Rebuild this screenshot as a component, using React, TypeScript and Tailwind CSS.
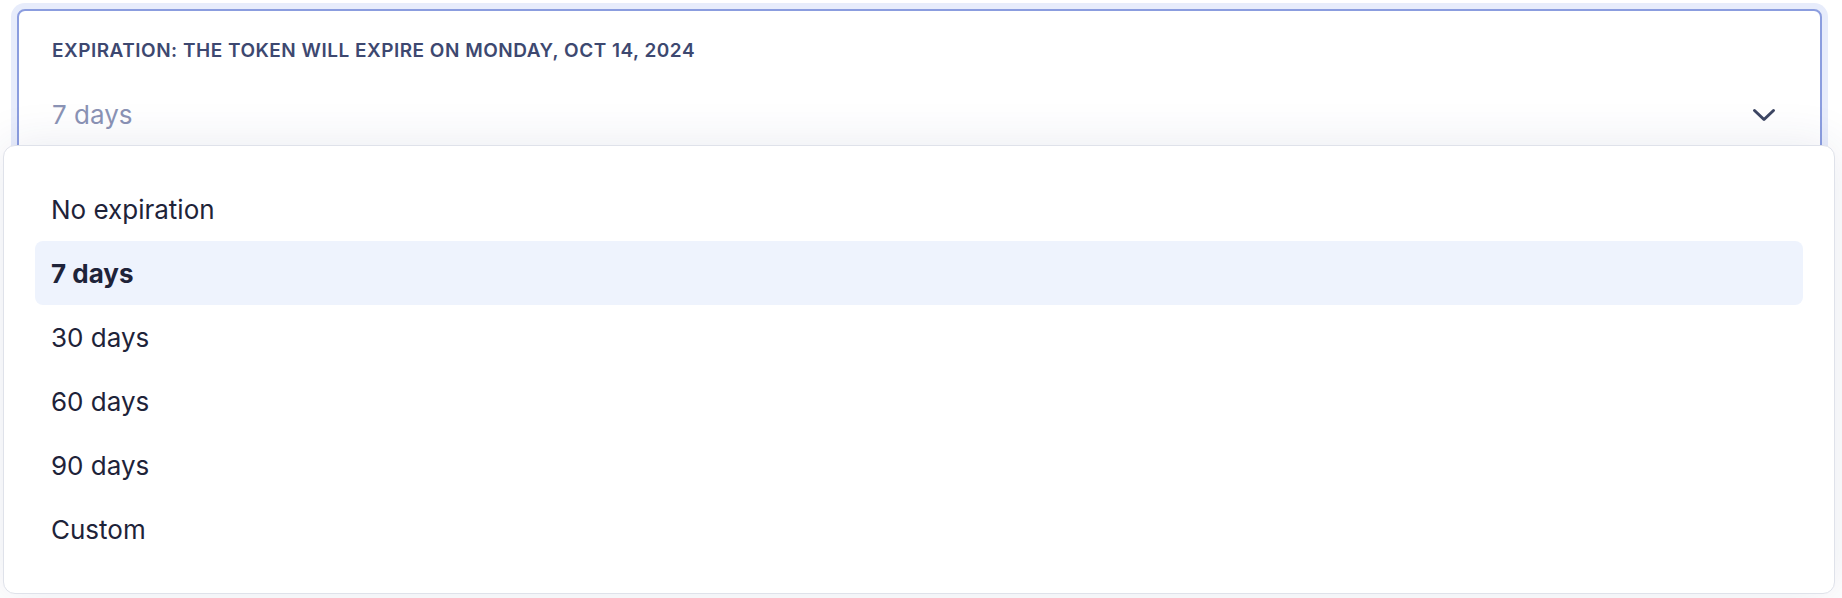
import React from "react";

const options = ["No expiration", "7 days", "30 days", "60 days", "90 days", "Custom"];

export default function App() {
  const selected = "7 days";
  return (
    <div
      className="relative h-[598px] w-[1842px] overflow-hidden bg-white"
      style={{ fontFamily: "Inter, 'Noto Sans', sans-serif" }}
    >
      <div className="pl-[17px] pr-[20px] pt-[9px]">
        <div className="relative h-[170px] rounded-[8px] border-2 border-[#8b9ddf] bg-white shadow-[0_0_0_6px_#e7ecfb]">
          <div className="pl-[33px] pt-[28px] text-[19px] font-semibold uppercase leading-[24px] tracking-[0.5px] text-[#3d4870]">
            Expiration: The token will expire on Monday, Oct 14, 2024
          </div>
          <div className="mt-[34px] flex items-center justify-between pl-[33px] pr-[44px]">
            <span className="text-[26px] leading-[36px] text-[#8b93b5]">7 days</span>
            <svg width="24" height="15" viewBox="0 0 24 15" fill="none" className="text-[#3d4663]">
              <path d="M2.5 2.5 L12 11.5 L21.5 2.5" stroke="currentColor" strokeWidth="3" strokeLinecap="round" strokeLinejoin="round" />
            </svg>
          </div>
        </div>
      </div>
      <div className="absolute left-[3px] top-[145px] w-[1832px] rounded-[12px] border border-[#dfe2ea] bg-white px-[31px] pb-[32px] pt-[31px] shadow-[0_0_48px_rgba(40,52,110,0.10)]">
        {options.map((o) => (
          <div
            key={o}
            className={
              o === selected
                ? "flex h-[64px] items-center rounded-[8px] bg-[#eef3fd] px-[16px] text-[26px] font-bold text-[#1e2339]"
                : "flex h-[64px] items-center rounded-[8px] px-[16px] text-[26px] text-[#1e2339]"
            }
          >
            {o}
          </div>
        ))}
      </div>
    </div>
  );
}
